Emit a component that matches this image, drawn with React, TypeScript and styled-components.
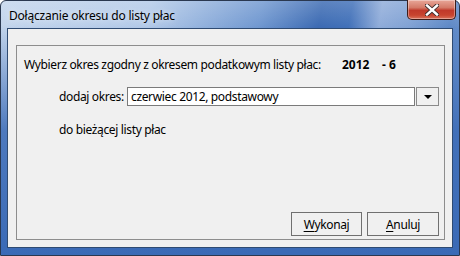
import React from "react";
import styled, { createGlobalStyle } from "styled-components";

const Global = createGlobalStyle`
  html, body { margin: 0; padding: 0; background: #ffffff; }
  body { font-family: "Noto Sans", "Open Sans", sans-serif; font-size: 12px; color: #000; letter-spacing: -0.35px; }
  * { box-sizing: border-box; }
`;

const Window = styled.div`
  width: 460px;
  height: 256px;
  border: 1px solid #2a3850;
  border-radius: 6px 6px 0 0;
  background:
    linear-gradient(180deg, rgba(255,255,255,0.18) 0px, rgba(255,255,255,0) 28px),
    linear-gradient(180deg, rgba(58,106,182,0) 24px, rgba(58,106,182,0.85) 130px, rgba(58,106,182,1) 256px),
    linear-gradient(100deg, #c3d5ec 0%, #b2c9e8 30%, #6f97d0 52%, #3a69b2 64%, #3f6fb8 70%, #8eabd9 76%, #7fa1d4 82%, #5d88c6 90%, #7d9fd2 100%);
  display: flex;
  flex-direction: column;
  padding: 0 6px 7px 6px;
  position: relative;
`;

const TitleBar = styled.div`
  height: 27px;
  display: flex;
  align-items: center;
  padding-left: 2px;
  padding-top: 2px;
`;

const Title = styled.span`
  font-size: 12px;
  color: #000;
  letter-spacing: -0.2px;
  text-shadow: 0 0 6px rgba(255,255,255,0.8);
`;

const CloseButton = styled.div`
  position: absolute;
  top: -1px;
  right: 3px;
  width: 49px;
  height: 20px;
  border: 1px solid #3d1d1a;
  border-top: none;
  border-radius: 0 0 5px 5px;
  background: linear-gradient(180deg, #e8a799 0%, #d47a68 40%, #c0392a 55%, #c8442f 80%, #d9735c 100%);
  box-shadow: inset 0 0 0 1px rgba(255,255,255,0.35);
  display: flex;
  align-items: center;
  justify-content: center;
`;

const Client = styled.div`
  flex: 1;
  border: 1px solid #2f4b72;
  background: #f0f0f0;
  padding: 16px 7px 7px 8px;
  display: flex;
`;

const Group = styled.div`
  flex: 1;
  border: 1px solid #8d8d8d;
  padding: 10px 5px 3px 7px;
  display: flex;
  flex-direction: column;
`;

const HeaderRow = styled.div`
  display: grid;
  grid-template-columns: 318px 40px auto;
  height: 16px;
  align-items: center;
`;

const Strong = styled.span`
  font-weight: bold;
  letter-spacing: 0;
`;

const ComboRow = styled.div`
  display: flex;
  align-items: center;
  margin-top: 15px;
  padding-left: 35px;
  height: 19px;
`;

const Label = styled.span`
  width: 68px;
  white-space: nowrap;
`;

const Input = styled.div`
  width: 288px;
  height: 19px;
  border: 1px solid #7a7a7a;
  background: #fff;
  padding-left: 3px;
  display: flex;
  align-items: center;
  white-space: nowrap;
`;

const DropButton = styled.div`
  width: 23px;
  height: 19px;
  margin-left: 1px;
  border: 1px solid #8a8a8a;
  background: #f0f0f0;
  display: flex;
  align-items: center;
  justify-content: center;
`;

const Triangle = styled.div`
  width: 0;
  height: 0;
  border-left: 4px solid transparent;
  border-right: 4px solid transparent;
  border-top: 4px solid #000;
  margin-top: 1px;
`;

const TextRow = styled.div`
  margin-top: 15px;
  padding-left: 35px;
  height: 16px;
  display: flex;
  align-items: center;
`;

const ButtonRow = styled.div`
  margin-top: auto;
  display: flex;
  justify-content: flex-end;
  gap: 5px;
`;

const Button = styled.div<{ $w: number }>`
  width: ${(p) => p.$w}px;
  height: 24px;
  border: 1px solid #707070;
  background: #f0f0f0;
  display: flex;
  align-items: center;
  justify-content: center;
`;

const U = styled.span`
  text-decoration: underline;
  text-underline-offset: 2px;
`;

export default function App() {
  return (
    <>
      <Global />
      <Window>
        <TitleBar>
          <Title>Dołączanie okresu do listy płac</Title>
        </TitleBar>
        <CloseButton>
          <svg width="14" height="12" viewBox="0 0 14 12">
            <path
              d="M2 1.5 L12 10.5 M12 1.5 L2 10.5"
              stroke="#3a2a2a"
              strokeWidth="4.2"
              strokeLinecap="square"
            />
            <path
              d="M2 1.5 L12 10.5 M12 1.5 L2 10.5"
              stroke="#ffffff"
              strokeWidth="2.4"
              strokeLinecap="square"
            />
          </svg>
        </CloseButton>
        <Client>
          <Group>
            <HeaderRow>
              <span>Wybierz okres zgodny z okresem podatkowym listy płac:</span>
              <Strong>2012</Strong>
              <Strong>- 6</Strong>
            </HeaderRow>
            <ComboRow>
              <Label>dodaj okres:</Label>
              <Input>czerwiec 2012, podstawowy</Input>
              <DropButton>
                <Triangle />
              </DropButton>
            </ComboRow>
            <TextRow>do bieżącej listy płac</TextRow>
            <ButtonRow>
              <Button $w={71}>
                <span>
                  <U>W</U>ykonaj
                </span>
              </Button>
              <Button $w={72}>
                <span>
                  <U>A</U>nuluj
                </span>
              </Button>
            </ButtonRow>
          </Group>
        </Client>
      </Window>
    </>
  );
}
